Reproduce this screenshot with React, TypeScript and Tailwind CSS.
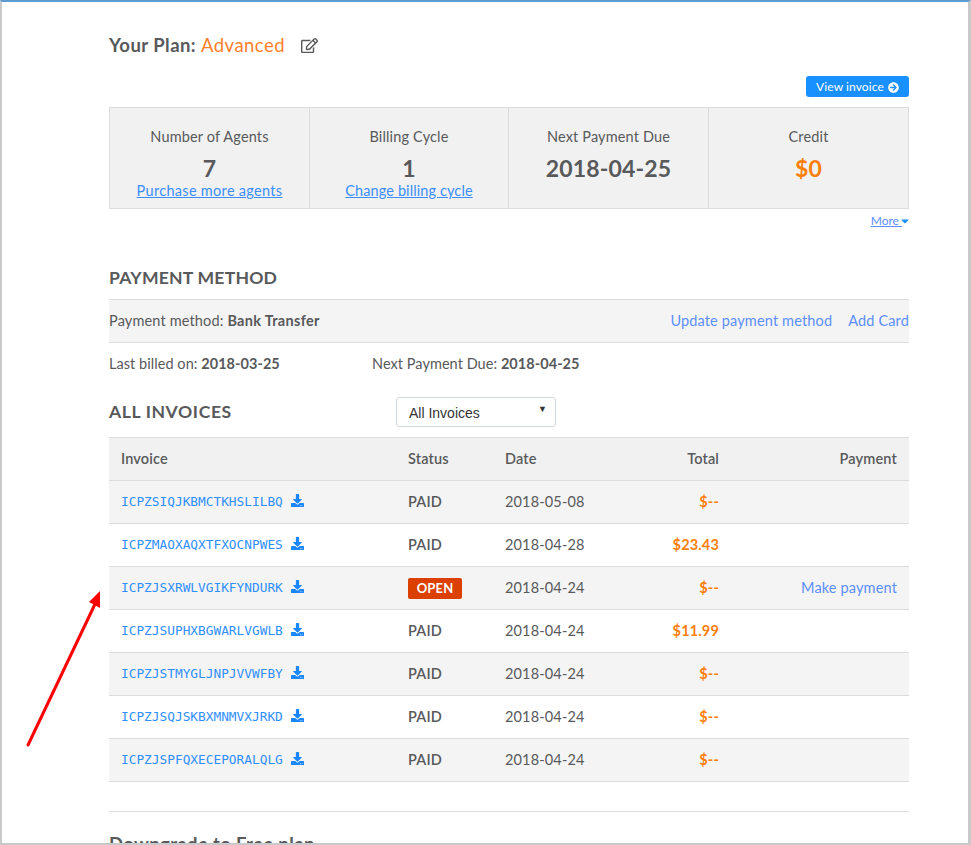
import { FaRegEdit, FaArrowCircleRight, FaDownload, FaCaretDown } from "react-icons/fa";

const rows = [
  { id: "ICPZSIQJKBMCTKHSLILBQ", status: "PAID", date: "2018-05-08", total: "$--", pay: "", alt: true },
  { id: "ICPZMAOXAQXTFXOCNPWES", status: "PAID", date: "2018-04-28", total: "$23.43", pay: "", alt: false },
  { id: "ICPZJSXRWLVGIKFYNDURK", status: "OPEN", date: "2018-04-24", total: "$--", pay: "Make payment", alt: true },
  { id: "ICPZJSUPHXBGWARLVGWLB", status: "PAID", date: "2018-04-24", total: "$11.99", pay: "", alt: false },
  { id: "ICPZJSTMYGLJNPJVVWFBY", status: "PAID", date: "2018-04-24", total: "$--", pay: "", alt: true },
  { id: "ICPZJSQJSKBXMNMVXJRKD", status: "PAID", date: "2018-04-24", total: "$--", pay: "", alt: false },
  { id: "ICPZJSPFQXECEPORALQLG", status: "PAID", date: "2018-04-24", total: "$--", pay: "", alt: true },
];

const stats = [
  { label: "Number of Agents", value: "7", link: "Purchase more agents", track: "tracking-[0.3px]", w: "w-[200px]", orange: false },
  { label: "Billing Cycle", value: "1", link: "Change billing cycle", track: "tracking-[0.1px]", w: "w-[199px]", orange: false },
  { label: "Next Payment Due", value: "2018-04-25", link: "", track: "", w: "w-[200px]", orange: false },
  { label: "Credit", value: "$0", link: "", track: "", w: "flex-1", orange: true },
];

export default function App() {
  return (
    <div className="relative h-[845px] w-[971px] overflow-hidden bg-white font-['Lato',sans-serif] text-[14.5px] tracking-[0.15px] text-[#58595b]">
      <div className="h-full overflow-hidden border-t-2 border-r-[3px] border-b-2 border-l-2 border-t-[#5b9bd5] border-r-[#c9c9c9] border-b-[#c9c9c9] border-l-[#c9c9c9] pl-[107px] pr-[59px]">
        <div className="flex h-[58px] items-end gap-[17px] text-[18.5px] tracking-[0.45px]">
          <div className="pb-[0.5px]">
            <span className="font-bold">Your Plan: </span>
            <span className="text-[#fc7f2c]">Advanced</span>
          </div>
          <FaRegEdit className="mb-[6px] -ml-[1px] text-[17px]" />
        </div>
        <div className="mt-[16px] flex justify-end">
          <button className="flex h-[21px] w-[103px] items-center justify-center gap-1 rounded-[3px] bg-[#1890ff] pt-[1px] text-[12px] tracking-[0.1px] text-white">
            View invoice <FaArrowCircleRight className="text-[11px]" />
          </button>
        </div>
        <div className="mt-[10px] flex h-[102px] border border-[#dcdcdc] bg-[#f1f1f1]">
          {stats.map((s, i) => (
            <div key={s.label} className={`${s.w} ${i < 3 ? "border-r border-[#dcdcdc]" : ""} pt-[19px] text-center`}>
              <div className="h-[20px] leading-[20px]">{s.label}</div>
              <div className={`mt-[9px] h-[25px] text-[23px] leading-[25px] font-bold ${s.orange ? "text-[#fc7f0c]" : ""}`}>{s.value}</div>
              {s.link && <a className={`block h-[20px] leading-[20px] ${s.track} text-[#3b8eff] underline`}>{s.link}</a>}
            </div>
          ))}
        </div>
        <div className="mt-[3px] flex h-[18px] items-center justify-end text-[12px] tracking-normal text-[#5b8fff]">
          <span className="underline">More&nbsp;</span>
          <FaCaretDown className="-mr-[2px] -ml-[3px] text-[12px] text-[#1890ff]" />
        </div>
        <h2 className="mt-[35px] h-[26px] text-[17.6px] leading-[26px] font-bold tracking-[0.2px]">PAYMENT METHOD</h2>
        <div className="mt-[8px] flex h-[44px] items-center justify-between border-y border-[#dcdcdc] bg-[#f4f4f4]">
          <div>
            Payment method: <span className="font-bold tracking-[0.3px]">Bank Transfer</span>
          </div>
          <div className="flex gap-4 text-[#5b8fff]">
            <a>Update payment method</a>
            <a>Add Card</a>
          </div>
        </div>
        <div className="flex h-[42px] items-center tracking-[0.05px]">
          <div className="w-[263px]">
            Last billed on: <span className="font-bold">2018-03-25</span>
          </div>
          <div>
            Next Payment Due: <span className="font-bold">2018-04-25</span>
          </div>
        </div>
        <div className="mt-[12px] flex h-[31px] items-start">
          <h2 className="w-[287px] pt-[2px] text-[17.6px] font-bold tracking-[0.6px]">ALL INVOICES</h2>
          <div className="flex h-[30px] w-[160px] items-center justify-between rounded-[3px] border border-[#cfd8dc] pt-[3px] pr-[8px] pl-[12px] font-['Liberation_Sans',sans-serif] text-[14px] tracking-normal text-[#333]">
            All Invoices
            <span className="mb-[7px] text-[9px]">▼</span>
          </div>
        </div>
        <div className="mt-[9px]">
          <div className="grid h-[44px] grid-cols-[287px_97px_120px_94px_1fr] items-center border-y border-[#dcdcdc] bg-[#f1f1f1] px-3 font-semibold">
            <div>Invoice</div>
            <div>Status</div>
            <div>Date</div>
            <div className="text-right">Total</div>
            <div className="text-right">Payment</div>
          </div>
          {rows.map((r) => (
            <div key={r.id} className={`grid h-[43px] grid-cols-[287px_97px_120px_94px_1fr] items-center border-b border-[#dcdcdc] px-3 ${r.alt ? "bg-[#f4f4f4]" : "bg-white"}`}>
              <div className="flex items-center gap-[8px] text-[#2f8fff]">
                <span className="font-['DejaVu_Sans_Mono',monospace] text-[12.8px] tracking-normal">{r.id}</span>
                <FaDownload className="mb-[3px] text-[13px] text-[#1a86ff]" />
              </div>
              <div>
                {r.status === "OPEN" ? (
                  <span className="inline-flex h-[21px] w-[54px] items-center justify-center rounded-[2px] bg-[#dc4000] text-[13px] font-bold text-white">OPEN</span>
                ) : (
                  <span className="font-semibold">{r.status}</span>
                )}
              </div>
              <div>{r.date}</div>
              <div className="text-right font-bold text-[#fc7f0c]">{r.total}</div>
              <div className="text-right text-[#5b8fff]">{r.pay}</div>
            </div>
          ))}
        </div>
        <div className="mt-[29px] border-t border-[#dcdcdc]" />
        <h2 className="mt-[20px] text-[18.5px] leading-[24px] font-bold tracking-[0.35px]">Downgrade to Free plan</h2>
      </div>
      <svg className="absolute top-[590px] left-[25px]" width="78" height="160" viewBox="0 0 78 160">
        <line x1="3" y1="155" x2="71" y2="12" stroke="#ff0000" strokeWidth="3" strokeLinecap="round" />
        <polygon points="75,1 64,12 75,18" fill="#ff0000" />
      </svg>
    </div>
  );
}
